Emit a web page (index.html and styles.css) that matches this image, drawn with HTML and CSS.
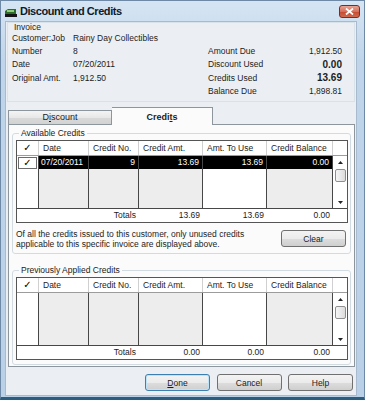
FILE: index.html
```html
<!doctype html>
<html>
<head>
<meta charset="utf-8">
<title>Discount and Credits</title>
	<link rel="stylesheet" href="styles.css">
</head>

<body>
<div class="window">
	<div class="titlebar">
		<svg class="appicon" width="12" height="9" viewBox="0 0 12 9">
			<path d="M0 3 L3 1 L11 1 L11 6 L0 6 Z" fill="#2f6e2a"/>
			<rect x="2" y="2" width="7" height="2" fill="#8fcf78"/>
			<rect x="0" y="6" width="12" height="3" fill="#151515"/>
		</svg>
		<span class="caption">Discount and Credits</span>
		<div class="close">
			<svg width="9" height="7" viewBox="0 0 9 7">
				<path d="M1 0.5 L8 6.5 M8 0.5 L1 6.5" stroke="#fff" stroke-width="1.8"/>
			</svg>
		</div>
	</div>

	<div class="client">
		<div class="invoice">
			<div class="inv-title">Invoice</div>
			<div class="inv-grid">
				<span>Customer:Job</span><span>Rainy Day Collectibles</span><span></span><span></span>
				<span>Number</span><span>8</span><span>Amount Due</span><span class="num">1,912.50</span>
				<span>Date</span><span>07/20/2011</span><span>Discount Used</span><span class="num big">0.00</span>
				<span>Original Amt.</span><span>1,912.50</span><span>Credits Used</span><span class="num big">13.69</span>
				<span></span><span></span><span>Balance Due</span><span class="num">1,898.81</span>
			</div>
		</div>

		<div class="tabs">
			<div class="tab">D<u>i</u>scount</div>
			<div class="tab active">Credi<u>t</u>s</div>
			<div class="tab-rest"></div>
		</div>

		<div class="panel">
			<fieldset class="group">
				<legend>Available Credits</legend>
				<div class="grid">
					<div class="ghead">
						<div class="w-chk mid"><span class="tick">✓</span></div>
						<div class="w-date">Date</div>
						<div class="w-no">Credit No.</div>
						<div class="w-amt">Credit Amt.</div>
						<div class="w-use">Amt. To Use</div>
						<div class="w-bal">Credit Balance</div>
						<div class="w-sb"></div>
					</div>
					<div class="gbody">
						<div class="col w-chk"><div class="chkbox"><span class="tick">✓</span></div></div>
						<div class="col w-date shade"><div class="sel">07/20/2011</div></div>
						<div class="col w-no shade"><div class="sel r">9</div></div>
						<div class="col w-amt shade"><div class="sel r">13.69</div></div>
						<div class="col w-use"><div class="sel r">13.69</div></div>
						<div class="col w-bal shade"><div class="sel r">0.00</div></div>
						<div class="col w-sb scroll">
							<svg class="arrow up" width="5" height="3" viewBox="0 0 5 3"><polygon points="0,3 2.5,0 5,3" fill="#222"/></svg>
							<div class="thumb"></div>
							<div class="fill"></div>
							<svg class="arrow" width="5" height="3" viewBox="0 0 5 3"><polygon points="0,0 5,0 2.5,3" fill="#222"/></svg>
						</div>
					</div>
					<div class="gtot">
						<div class="w-chk"></div>
						<div class="w-date"></div>
						<div class="w-no r">Totals</div>
						<div class="w-amt r">13.69</div>
						<div class="w-use r">13.69</div>
						<div class="w-bal r">0.00</div>
					</div>
				</div>
				<div class="note">
					<p>Of all the credits issued to this customer, only unused credits<br>applicable to this specific invoice are displayed above.</p>
					<button type="button" class="btn clear">Clear</button>
				</div>
			</fieldset>

			<fieldset class="group second">
				<legend>Previously Applied Credits</legend>
				<div class="grid">
					<div class="ghead">
						<div class="w-chk mid"><span class="tick">✓</span></div>
						<div class="w-date">Date</div>
						<div class="w-no">Credit No.</div>
						<div class="w-amt">Credit Amt.</div>
						<div class="w-use">Amt. To Use</div>
						<div class="w-bal">Credit Balance</div>
						<div class="w-sb"></div>
					</div>
					<div class="gbody">
						<div class="col w-chk"></div>
						<div class="col w-date shade"></div>
						<div class="col w-no shade"></div>
						<div class="col w-amt shade"></div>
						<div class="col w-use"></div>
						<div class="col w-bal shade"></div>
						<div class="col w-sb scroll">
							<svg class="arrow up" width="5" height="3" viewBox="0 0 5 3"><polygon points="0,3 2.5,0 5,3" fill="#222"/></svg>
							<div class="thumb"></div>
							<div class="fill"></div>
							<svg class="arrow" width="5" height="3" viewBox="0 0 5 3"><polygon points="0,0 5,0 2.5,3" fill="#222"/></svg>
						</div>
					</div>
					<div class="gtot">
						<div class="w-chk"></div>
						<div class="w-date"></div>
						<div class="w-no r">Totals</div>
						<div class="w-amt r">0.00</div>
						<div class="w-use r">0.00</div>
						<div class="w-bal r">0.00</div>
					</div>
				</div>
			</fieldset>
		</div>

		<div class="buttons">
			<button type="button" class="btn default"><u>D</u>one</button>
			<button type="button" class="btn">Cancel</button>
			<button type="button" class="btn">Help</button>
		</div>
	</div>
</div>
</body>
</html>
```

FILE: styles.css
```css
*{padding: 0;margin: 0;box-sizing: border-box;}
body{font-family: "Liberation Sans", Arial, sans-serif;font-size: 8.5px;color: #1c1c1c;background: #fff;}

/* window frame */
.window{
	width: 365px;
	height: 400px;
	display: flex;
	flex-direction: column;
	background: linear-gradient(#d6e5f3, #c0d5ea 60px, #b9d0e7);
	border: 1px solid #6d89a5;
	border-bottom: 3px solid #2b5d7e;
	padding: 0 7px 1px 4px;}

.titlebar{
	height: 20px;
	display: flex;
	align-items: center;}
.appicon{margin-top: 2px;}
.caption{
	margin-left: 3px;
	font-size: 11px;
	font-weight: bold;
	letter-spacing: -0.45px;
	color: #0d1a2a;}
.close{
	margin-left: auto;
	margin-right: -3px;
	width: 21px;
	height: 13px;
	border: 1px solid #7b2c22;
	border-radius: 3px;
	background: linear-gradient(#e9a595, #d4705c 50%, #c4482f 51%, #cf6a4f);
	display: flex;
	align-items: center;
	justify-content: center;}

.client{
	flex: 1;
	background: #ebeff3;
	border: 1px solid #a7bace;
	display: flex;
	flex-direction: column;}

/* invoice header */
.invoice{
	height: 80px;
	margin: 0 1px;
	border: 1px solid #dae2e9;
	padding: 0 4px;}
.inv-title{height: 8px;line-height: 8px;padding-left: 2px;}
.inv-grid{
	display: grid;
	grid-template-columns: 61px 135px 70px 64px;
	grid-auto-rows: 13.3px;
	align-items: center;}
.inv-grid .num{text-align: right;}
.inv-grid .big{font-size: 10px;font-weight: bold;}

/* tabs */
.tabs{
	height: 18px;
	margin: 5px 1px 0 2px;
	display: flex;
	align-items: flex-end;}
.tab{
	width: 104px;
	height: 15px;
	border: 1px solid #8e969d;
	background: linear-gradient(#f4f4f4, #e8e8e8 50%, #d9d9d9 51%, #d2d2d2);
	text-align: center;
	line-height: 13px;
	font-size: 9px;}
.tab.active{
	width: 101px;
	height: 18px;
	border-left: none;
	border-bottom: none;
	background: #fbfbfb;
	font-weight: bold;
	line-height: 18px;}
.tab-rest{flex: 1;border-bottom: 1px solid #8e969d;}

.panel{
	height: 242px;
	margin: 0 1px 0 2px;
	border: 1px solid #8e969d;
	border-top: none;
	background: #fbfbfb;}

.group{
	margin: 3px 3px 0;
	padding: 2px 2px 4px 3px;
	border: 1px solid #d3dbe2;
	border-radius: 3px;
	min-width: 0;}
.group legend{margin-left: 3px;padding: 0 2px;line-height: 10px;color: #222;}
.group.second{margin-top: 11px;}

/* credit grids */
.grid{border: 1px solid #555;background: #fff;}
.ghead, .gbody, .gtot{display: flex;}
.ghead{height: 15px;border-bottom: 1px solid #9c9c9c;}
.ghead div{border-right: 1px solid #d0d0d0;line-height: 14px;padding-left: 4px;}
.ghead .w-sb{border-right: none;}
.gbody{height: 52px;}
.col{border-right: 1px solid #474747;}
.col.shade{background: #ededed;}
.gtot{height: 14px;border-top: 1px solid #474747;line-height: 13px;}
.gtot .r{padding-right: 3px;}

.w-chk{width: 22px;}
.w-date{width: 50px;}
.w-no{width: 50px;}
.w-amt{width: 64px;}
.w-use{width: 64px;}
.w-bal{width: 66px;}
.w-sb{width: 14px;}
.r{text-align: right;}
.ghead .mid{padding-left: 0;text-align: center;}
.tick{font-family: "DejaVu Sans", sans-serif;font-size: 10px;font-weight: bold;color: #000;}

.sel{height: 13px;line-height: 13px;background: #000;color: #fff;padding: 0 3px 0 2px;}
.chkbox{
	height: 12px;
	margin: 1px 0 0 1px;
	width: 19px;
	border: 1px solid #6b6b6b;
	background: #fff;
	text-align: center;
	line-height: 10px;}

.scroll{
	border-right: none;
	display: flex;
	flex-direction: column;
	align-items: center;
	padding: 5px 0 4px;}
.thumb{
	width: 11px;
	height: 13px;
	margin-top: 5px;
	border: 1px solid #8f8f8f;
	border-radius: 2px;
	background: linear-gradient(90deg, #f6f6f6, #dcdcdc);}
.fill{flex: 1;}

.note{display: flex;align-items: flex-start;margin-top: 7px;}
.note p{flex: 1;line-height: 9.5px;}

/* buttons */
.btn{
	width: 65px;
	height: 17px;
	border: 1px solid #707070;
	border-radius: 3px;
	background: linear-gradient(#f3f3f3, #ebebeb 50%, #dddddd 51%, #cfcfcf);
	font-family: "Liberation Sans", Arial, sans-serif;
	font-size: 8.5px;
	color: #1c1c1c;}
.clear{margin-right: 2px;}
.btn.default{border-color: #3c7fb1;box-shadow: inset 0 0 0 1px #bfe3f6;}
.buttons{
	display: flex;
	justify-content: flex-end;
	gap: 6.5px;
	margin: 7px 3px 0 0;}
```
